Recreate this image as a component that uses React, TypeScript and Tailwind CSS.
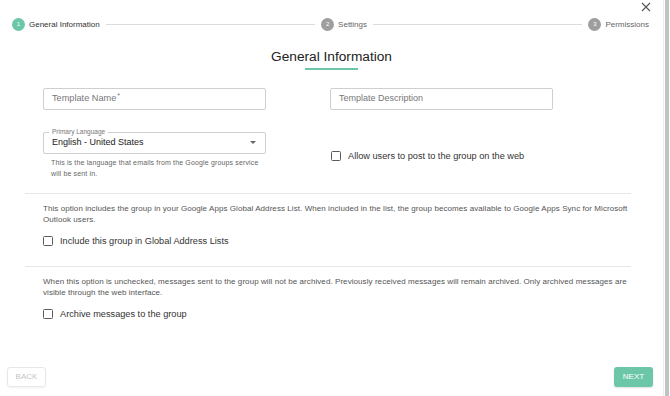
import React from "react";

const steps = [
    { n: 1, label: "General Information", active: true },
    { n: 2, label: "Settings", active: false },
    { n: 3, label: "Permissions", active: false },
];

function Checkbox({ label }: { label: string }) {
    return (
        <label className="flex items-center h-[12px] gap-[7px]">
            <span className="w-[10px] h-[10px] border-[1.5px] border-[#5a5a5a] rounded-[1.5px] shrink-0" />
            <span className="text-[9.2px] text-[#333] leading-[12px]">{label}</span>
        </label>
    );
}

export default function App() {
    return (
        <div className="flex w-[670px] h-[396px] bg-white overflow-hidden antialiased" style={{ fontFamily: '"Liberation Sans", Arial, sans-serif' }}>
            <div className="relative flex flex-col w-[663px] h-full">
                {/* close */}
                <button className="absolute top-[2px] right-[12px] w-[10px] h-[10px] text-[#555]">
                    <svg viewBox="0 0 10 10" className="w-[10px] h-[10px]">
                        <path d="M1 1L9 9M9 1L1 9" stroke="currentColor" strokeWidth="1.1" />
                    </svg>
                </button>

                {/* stepper */}
                <div className="flex items-center h-[13px] mt-[18px] pl-[12px] pr-[14px]">
                    {steps.map((s, i) => (
                        <React.Fragment key={s.n}>
                            {i > 0 && <div className="flex-1 h-px bg-[#dcdcdc] mx-[6px]" />}
                            <div className="flex items-center">
                                <span
                                    className={
                                        "w-[13px] h-[13px] rounded-full flex items-center justify-center text-white text-[6px] " +
                                        (s.active ? "bg-[#6cc7a8]" : "bg-[#9e9e9e]")
                                    }
                                >
                                    {s.n}
                                </span>
                                <span className={"ml-[4px] text-[8px] " + (s.active ? "text-[#333]" : "text-[#666]")}>{s.label}</span>
                            </div>
                        </React.Fragment>
                    ))}
                </div>

                {/* title */}
                <div className="flex flex-col items-center mt-[17px]">
                    <h1 className="text-[13.7px] leading-[18px] text-[#222]">General Information</h1>
                    <div className="w-[53px] h-[1.5px] bg-[#6cc7a8] mt-[2px]" />
                </div>

                {/* top form */}
                <div className="flex pl-[43px] mt-[18px]">
                    <div className="w-[287px]">
                        <div className="w-[223px] h-[22px] border border-[#cfcfcf] rounded-[2px] flex items-center px-[8px] text-[9.2px] text-[#777]">
                            Template Name<span className="text-[7px] ml-[1px] -mt-[4px]">*</span>
                        </div>
                        <div className="relative w-[223px] h-[22px] border border-[#cfcfcf] rounded-[2px] flex items-center px-[8px] mt-[22px]">
                            <span className="absolute -top-[5px] left-[5px] bg-white px-[3px] text-[6.5px] leading-[8px] text-[#777]">
                                Primary Language
                            </span>
                            <span className="text-[9px] text-[#222] mt-[1px]">English - United States</span>
                            <span className="ml-auto mr-[1px] w-0 h-0 border-l-[3px] border-r-[3px] border-t-[3.5px] border-l-transparent border-r-transparent border-t-[#666]" />
                        </div>
                        <p className="mt-[3px] pl-[8px] w-[223px] text-[7px] leading-[11px] tracking-[0.15px] text-[#666]">
                            This is the language that emails from the Google groups service will be sent in.
                        </p>
                    </div>
                    <div className="w-[287px]">
                        <div className="w-[223px] h-[22px] border border-[#cfcfcf] rounded-[2px] flex items-center px-[8px] text-[9px] text-[#777]">
                            Template Description
                        </div>
                        <div className="mt-[40px] pl-[1px]">
                            <Checkbox label="Allow users to post to the group on the web" />
                        </div>
                    </div>
                </div>

                {/* global address */}
                <div className="ml-[25px] mr-[32px] mt-[14px] border-t border-[#e6e6e6]">
                    <div className="pl-[18px]">
                        <p className="mt-[9px] text-[8px] leading-[11px] tracking-[0.07px] text-[#555]">
                            This option includes the group in your Google Apps Global Address List. When included in the list, the group becomes available to Google Apps Sync for Microsoft Outlook users.
                        </p>
                        <div className="mt-[10px]">
                            <Checkbox label="Include this group in Global Address Lists" />
                        </div>
                    </div>
                </div>

                {/* archive */}
                <div className="ml-[25px] mr-[32px] mt-[19px] border-t border-[#e6e6e6]">
                    <div className="pl-[18px]">
                        <p className="mt-[9px] text-[8px] leading-[11px] tracking-[0.07px] text-[#555]">
                            When this option is unchecked, messages sent to the group will not be archived. Previously received messages will remain archived. Only archived messages are visible through the web interface.
                        </p>
                        <div className="mt-[10px]">
                            <Checkbox label="Archive messages to the group" />
                        </div>
                    </div>
                </div>

                {/* footer */}
                <div className="mt-auto flex justify-between items-center pl-[7px] pr-[10px] pb-[9px]">
                    <button className="w-[39px] h-[20px] rounded-[3px] border border-[#e8e8e8] shadow-[0_1px_2px_rgba(0,0,0,0.06)] text-[8px] text-[#c4c4c4]">
                        BACK
                    </button>
                    <button className="w-[39px] h-[20px] rounded-[3px] bg-[#6cc7a8] shadow-[0_1px_2px_rgba(0,0,0,0.12)] text-[8px] text-white">
                        NEXT
                    </button>
                </div>
            </div>

            {/* scrollbar */}
            <div className="w-[7px] h-full border-l border-[#ececec] flex justify-start pl-[1px]">
                <div className="w-[4px] h-full bg-[#c2c2c2]" />
            </div>
        </div>
    );
}
